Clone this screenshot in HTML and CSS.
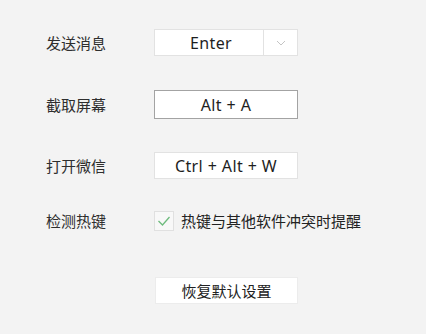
FILE: index.html
```html
<!DOCTYPE html>
<html lang="zh-CN">
<head>
    <meta charset="UTF-8">
    <meta name="viewport" content="width=device-width, initial-scale=1.0">
    <title>快捷按键</title>
    <link rel="stylesheet" href="styles.css">
</head>
<body>
    <div class="panel">
        <div class="row row-send">
            <span class="label">发送消息</span>
            <div class="field select">
                <span class="select-value">Enter</span>
                <span class="select-arrow">
                    <svg width="10" height="6" viewBox="0 0 10 6"><path d="M1 1 L5 5 L9 1" fill="none" stroke="#c4c4c4" stroke-width="1"/></svg>
                </span>
            </div>
        </div>

        <div class="row row-shot">
            <span class="label">截取屏幕</span>
            <div class="field active">Alt + A</div>
        </div>

        <div class="row row-open">
            <span class="label">打开微信</span>
            <div class="field">Ctrl + Alt + W</div>
        </div>

        <div class="row row-check">
            <span class="label">检测热键</span>
            <label class="check">
                <span class="check-box">
                    <svg width="14" height="12" viewBox="0 0 14 12"><path d="M1.5 6 L5.5 10 L12.5 2" fill="none" stroke="#6dbb7d" stroke-width="1.3"/></svg>
                </span>
                <span class="check-text">热键与其他软件冲突时提醒</span>
            </label>
        </div>

        <div class="row row-reset">
            <span class="label"></span>
            <button class="reset" type="button">恢复默认设置</button>
        </div>
    </div>
</body>
</html>
```

FILE: styles.css
```css
body {
    margin: 0;
    padding: 0;
    background-color: #f3f3f3;
    font-family: "Noto Sans", "Noto Sans CJK SC", sans-serif;
    font-size: 15px;
    color: #333;
}

.panel {
    padding: 29px 0 0 46px;
}

.row {
    display: flex;
    align-items: center;
    height: 27px;
}

.row-send {
    margin-bottom: 34px;
}

.row-shot {
    height: 29px;
    margin-bottom: 33px;
}

.row-open {
    margin-bottom: 28px;
}

.row-check {
    height: 27px;
    margin-bottom: 43px;
}

.label {
    width: 108px;
    flex-shrink: 0;
    color: #2e2e2e;
}

.field {
    box-sizing: border-box;
    width: 144px;
    height: 100%;
    display: flex;
    align-items: center;
    justify-content: center;
    background: #fff;
    border: 1px solid #e2e2e2;
    color: #1e1e1e;
    font-size: 16px;
    letter-spacing: 0.4px;
}

.field.active {
    border-color: #a3a3a3;
}

.select {
    justify-content: flex-start;
}

.select-value {
    flex: 1;
    text-align: center;
    padding-left: 4px;
}

.select-arrow {
    width: 33px;
    height: 100%;
    border-left: 1px solid #e2e2e2;
    display: flex;
    align-items: center;
    justify-content: center;
}

.check {
    display: flex;
    align-items: center;
    gap: 7px;
    color: #222;
}

.check-box {
    box-sizing: border-box;
    width: 20px;
    height: 20px;
    border: 1px solid #e0e0e0;
    background: #f8f8f8;
    display: flex;
    align-items: center;
    justify-content: center;
}

.reset {
    box-sizing: border-box;
    width: 143px;
    height: 100%;
    margin-left: 1px;
    background: #fff;
    border: 1px solid #ececec;
    font-family: "Noto Sans CJK SC", sans-serif;
    font-size: 15px;
    color: #222;
    padding: 0;
}
```
